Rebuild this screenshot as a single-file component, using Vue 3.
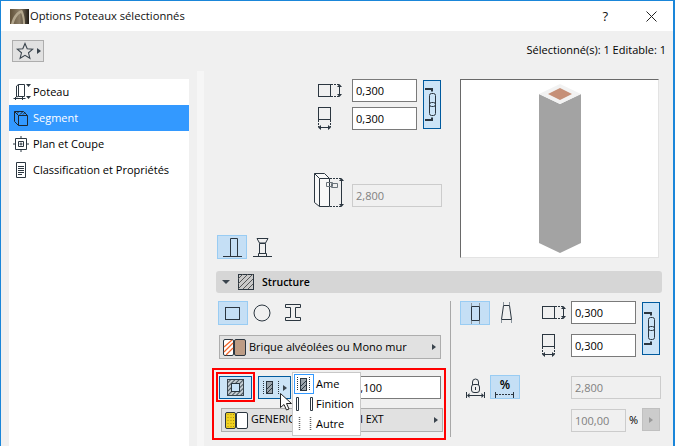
<script setup>
const navItems = [
  { id: 'poteau', label: 'Poteau' },
  { id: 'segment', label: 'Segment', active: true },
  { id: 'plan', label: 'Plan et Coupe' },
  { id: 'classif', label: 'Classification et Propriétés' }
]
</script>

<template>
  <div class="win">
    <header class="titlebar">
      <svg class="app-ico" width="19" height="15" viewBox="0 0 19 15">
        <defs>
          <linearGradient id="tg" x1="0" y1="0" x2="1" y2="0">
            <stop offset="0" stop-color="#5f5038" />
            <stop offset="0.5" stop-color="#8d7f68" />
            <stop offset="1" stop-color="#1f1b16" />
          </linearGradient>
          <pattern id="hp" width="3" height="3" patternUnits="userSpaceOnUse" patternTransform="rotate(45)">
            <rect width="3" height="3" fill="#c4ccd2" />
            <rect width="1" height="3" fill="#4a555e" />
          </pattern>
        </defs>
        <rect width="19" height="15" fill="url(#tg)" />
        <path d="M1 15C3 7 7 2 12 1c2 3 3 9 3 14h-2c0-5-1-9-2-11C7 6 5 10 3.500 15z" fill="#b3a78e" />
      </svg>
      <span class="title">Options Poteaux sélectionnés</span>
      <span class="help">?</span>
      <svg class="close" width="11" height="11" viewBox="0 0 11 11"><path d="M.5.5l10 10M10.500.5l-10 10" stroke="#222" fill="none" /></svg>
    </header>

    <div class="toolbar">
      <button class="fav">
        <svg width="18" height="18" viewBox="0 0 18 18"><path d="M9 1.500l2.200 5.200 5.600.4-4.300 3.700 1.400 5.500L9 13.400l-4.900 2.900 1.400-5.500L1.200 7.100l5.600-.4z" fill="none" stroke="#3a444d" stroke-width="1.100" /></svg>
        <i class="tri-r dark"></i>
      </button>
      <span class="sel-info">Sélectionné(s): 1 Editable: 1</span>
    </div>

    <div class="body">
      <nav class="side">
        <div v-for="item in navItems" :key="item.id" class="nav-row" :class="{ active: item.active }">
          <svg v-if="item.id === 'poteau'" class="nav-ic" width="18" height="20" viewBox="0 0 18 20">
            <path d="M5.500 2.500h6v12h-6zM5.500 2.500l-2 1.500v11l2-.5M.5 16.500h12M2.500 15v3M9.500 15v3" class="ln" />
            <path d="M13 2h5l-2.500 3zM13 14h5l-2.500 3z" fill="#2b3640" />
          </svg>
          <svg v-else-if="item.id === 'segment'" class="nav-ic" width="18" height="20" viewBox="0 0 18 20">
            <path d="M5.500 7.500h9v10h-9zM5.500 7.500l-4-4h9l4 4M1.500 3.500v10l4 4" class="ln dark" />
            <path d="M4 5.500l2-2M7 6.500l3-3M10 6.500l2-2" class="ln dark" />
          </svg>
          <svg v-else-if="item.id === 'plan'" class="nav-ic" width="18" height="20" viewBox="0 0 18 20">
            <path d="M2.500 4.500h11v11h-11zM8 2v3M8 15v3M0 10h3M13 10h3M5.500 7.500h5v5h-5zM8 8.500v3M6.500 10h3" class="ln" />
          </svg>
          <svg v-else class="nav-ic" width="18" height="20" viewBox="0 0 18 20">
            <path d="M3.500 2.500h9v15h-9zM5 6.500h6M5 8.500h6M5 10.500h6M5 12.500h6M5 14.500h4" class="ln" />
          </svg>
          <span class="lift">{{ item.label }}</span>
        </div>
      </nav>
      <div class="strip"></div>

      <main class="main">
        <section class="top">
          <div class="geom">
            <div class="dims">
              <svg class="dim-ic" width="26" height="23" viewBox="0 0 26 23">
                <rect x=".5" y="5.500" width="12" height="12" class="ln" />
                <path d="M13 5.500h8M13 17.500h8" class="dash" />
                <path d="M21.500 7v9" class="ln" />
                <path d="M19 8l2.500-3L24 8zM19 15l2.500 3 2.500-3z" fill="#2b3640" />
              </svg>
              <input class="field" readonly value="0,300" />
              <button class="link">
                <svg width="16" height="47" viewBox="0 0 16 47">
                  <path d="M1 8h7v2.500M1 39h7v-2.500" fill="none" stroke="#2b3640" stroke-width="2" />
                  <rect x="5.500" y="12.500" width="6" height="13" rx="2" class="ln" />
                  <rect x="5.500" y="21.500" width="6" height="13" rx="2" class="ln" />
                </svg>
              </button>
              <svg class="dim-ic second" width="26" height="23" viewBox="0 0 26 23">
                <rect x=".5" y=".5" width="12" height="12" class="ln" />
                <path d="M.5 13v7M12.500 13v7" class="dash" />
                <path d="M2 20.500h9" class="ln" />
                <path d="M3 18L0 20.500 3 23zM10 18l3 2.500-3 2.500z" fill="#2b3640" />
              </svg>
              <input class="field second" readonly value="0,300" />
            </div>
            <div class="height-row">
              <svg class="h-ic" width="31" height="35" viewBox="0 0 31 35">
                <path d="M.5.500h10l5 5v28h-10l-5-4z" fill="#f8f8f8" />
                <path d="M.5.500h10l5 5h-10zM5.500 5.500v28h10v-28M.5.500v29l5 4" class="ln" />
                <path d="M16 5.500h11M16 33.500h11" class="dash" />
                <path d="M27.500 7v25" class="ln" />
                <path d="M25 8l2.500-3L30 8zM25 31l2.500 3 2.500-3z" fill="#2b3640" />
                <path d="M12.500 9.500h6v4h-6zM17.500 10.500h6v4h-6z" fill="none" stroke="#6b747b" />
              </svg>
              <input class="field disabled wide" disabled value="2,800" />
            </div>
            <div class="col-types">
              <button class="tog sel">
                <svg width="30" height="24" viewBox="0 0 30 24"><path d="M13.500 21V3.500h7V21M6 21.500h19" class="ln" /></svg>
              </button>
              <svg class="tog-ic" width="20" height="24" viewBox="0 0 20 24">
                <path d="M4 3.500h11l-2.500 4.500h-6zM6.500 8.500h6v10h-6zM5.500 18.500h8v3h-8zM0 21.500h19" class="ln" />
              </svg>
            </div>
          </div>
          <div class="preview">
            <svg width="197" height="177" viewBox="0 0 197 177">
              <path d="M78 14l21 10 21-10v149l-21 10-21-10z" fill="#a3a3a3" />
              <path d="M99 4l21 10-21 10-21-10z" fill="#f2f2f2" />
              <path d="M99 8l12 6-12 6-12-6z" fill="#c69078" />
            </svg>
          </div>
        </section>

        <div class="sec-head">
          <i class="tri-d"></i>
          <svg class="hatch" width="16" height="16" viewBox="0 0 16 16">
            <rect x=".5" y=".5" width="15" height="15" fill="#c9c9c9" stroke="#2b3640" />
            <path d="M0 5L5 0M0 10L10 0M0 15L15 0M5 15L15 5M10 15l5-5" stroke="#555" fill="none" />
          </svg>
          <strong>Structure</strong>
        </div>

        <section class="lower">
          <div class="lower-left">
            <div class="shapes">
              <button class="tog sel">
                <svg width="30" height="24" viewBox="0 0 30 24"><rect x="7.500" y="6.500" width="14" height="12" class="ln" /></svg>
              </button>
              <svg class="shape-c" width="18" height="18" viewBox="0 0 18 18"><circle cx="9" cy="9" r="8" class="ln" /></svg>
              <svg class="shape-i" width="16" height="18" viewBox="0 0 16 18"><path d="M.5.500h15v3h-5v10h5v3H.5v-3h5v-10h-5z" class="ln" /></svg>
            </div>
            <button class="sel-box first">
              <svg class="swatch" width="23" height="17" viewBox="0 0 23 17">
                <rect x=".5" y=".5" width="10" height="16" rx="1.500" fill="#fff" stroke="#2b3640" />
                <path d="M1 8l8-7M1 13l9-9M3 16l7-7" stroke="#f0642a" stroke-width="1.200" fill="none" />
                <rect x="11.500" y=".5" width="11" height="16" rx="1.500" fill="#bc9c85" stroke="#2b3640" />
              </svg>
              <span class="lift">Brique alvéolées ou Mono mur</span>
              <i class="tri-r dark end"></i>
            </button>

            <div class="annot">
              <div class="annot-row">
                <div class="annot-inner">
                  <button class="mode-btn">
                    <svg width="31" height="21" viewBox="0 0 31 21">
                      <rect x="7.500" y="2.500" width="16" height="16" fill="url(#hp)" stroke="#3a444d" />
                      <rect x="11.500" y="6.500" width="8" height="8" fill="#c8e2f8" stroke="#2b3640" />
                    </svg>
                  </button>
                </div>
                <button class="split-btn">
                  <svg width="24" height="21" viewBox="0 0 24 21">
                    <path d="M4.500 4v13M19.500 4v13" stroke="#2b3640" stroke-dasharray="1 1" fill="none" />
                    <rect x="7.500" y="4.500" width="6" height="12" fill="#9aa4ac" stroke="#2b3640" />
                    <path d="M8 12l5-5M8 16l5-5" stroke="#2b3640" fill="none" />
                  </svg>
                  <i class="tri-r dark"></i>
                </button>
                <input class="field val" readonly value="0,100" />
              </div>
              <button class="sel-box second">
                <svg class="swatch" width="23" height="17" viewBox="0 0 23 17">
                  <rect x=".5" y=".5" width="10" height="16" rx="1.500" fill="#f0d020" stroke="#2b3640" />
                  <path d="M3 2v13M6 2v13M8.500 2v13" stroke="#a88f10" stroke-dasharray="1 2" fill="none" />
                  <rect x="11.500" y=".5" width="11" height="16" rx="1.500" fill="#fff" stroke="#2b3640" />
                </svg>
                <span class="lift tight">GENERIC - ENDUI MINI EXT</span>
                <i class="tri-r dark end"></i>
              </button>

              <div class="popup">
                <div class="pop-row">
                  <span class="pop-ic focus">
                    <svg width="18" height="18" viewBox="0 0 18 18">
                      <path d="M2.500 2v14M14.500 2v14" stroke="#2b3640" stroke-dasharray="1 1" fill="none" />
                      <rect x="5.500" y="3.500" width="6" height="12" fill="#9aa4ac" stroke="#2b3640" />
                      <path d="M6 11l5-5M6 15l5-5" stroke="#2b3640" fill="none" />
                    </svg>
                  </span>
                  <span class="lift">Ame</span>
                </div>
                <div class="pop-row">
                  <span class="pop-ic">
                    <svg width="20" height="20" viewBox="0 0 20 20"><path d="M2.500 3.500h2v13h-2zM16.500 3.500h2v13h-2z" class="ln" /></svg>
                  </span>
                  <span class="lift">Finition</span>
                </div>
                <div class="pop-row">
                  <span class="pop-ic">
                    <svg width="20" height="20" viewBox="0 0 20 20">
                      <path d="M5.500 3v14M16.500 3v14" stroke="#666" stroke-width="1.500" stroke-dasharray="1 1" fill="none" />
                    </svg>
                  </span>
                  <span class="lift">Autre</span>
                </div>
              </div>

              <svg class="cursor" width="13" height="18" viewBox="0 0 13 18">
                <path d="M.5.500v14l3.500-3 2.500 5.500 2.500-1-2.500-5.500h5z" fill="#fff" stroke="#222" />
              </svg>
            </div>
          </div>

          <div class="divider"></div>

          <div class="lower-right">
            <div class="r-types">
              <button class="tog sel">
                <svg width="30" height="24" viewBox="0 0 30 24">
                  <path d="M11.500 5.500h8v14h-8z" class="ln" />
                  <path d="M11.500 2v3M19.500 2v3M11.500 20v3M19.500 20v3" fill="none" stroke="#8a949c" />
                </svg>
              </button>
              <svg class="trap" width="13" height="24" viewBox="0 0 13 24">
                <path d="M3.500 4.500h6l2 14h-10z" class="ln" />
                <path d="M3.500 1v3M9.500 1v3M1.500 19v3M11.500 19v3" fill="none" stroke="#8a949c" />
              </svg>
            </div>
            <svg class="ric r1" width="26" height="23" viewBox="0 0 26 23">
              <rect x=".5" y="5.500" width="12" height="12" class="ln" />
              <path d="M13 5.500h8M13 17.500h8" class="dash" />
              <path d="M21.500 7v9" class="ln" />
              <path d="M19 8l2.500-3L24 8zM19 15l2.500 3 2.500-3z" fill="#2b3640" />
            </svg>
            <input class="field r1f" readonly value="0,300" />
            <button class="link r-link">
              <svg width="16" height="51" viewBox="0 0 16 51">
                <path d="M1 10h7v2.500M1 41h7v-2.500" fill="none" stroke="#2b3640" stroke-width="2" />
                <rect x="5.500" y="14.500" width="6" height="13" rx="2" class="ln" />
                <rect x="5.500" y="23.500" width="6" height="13" rx="2" class="ln" />
              </svg>
            </button>
            <svg class="ric r2" width="26" height="23" viewBox="0 0 26 23">
              <rect x=".5" y=".5" width="12" height="12" class="ln" />
              <path d="M.5 13v7M12.500 13v7" class="dash" />
              <path d="M2 20.500h9" class="ln" />
              <path d="M3 18L0 20.500 3 23zM10 18l3 2.500-3 2.500z" fill="#2b3640" />
            </svg>
            <input class="field r2f" readonly value="0,300" />

            <div class="r-mode">
              <svg class="lock" width="19" height="22" viewBox="0 0 19 22">
                <path d="M6.500 9V6a3 3 0 0 1 6 0v3" class="ln" />
                <rect x="5.500" y="8.500" width="8" height="8" rx="2.500" fill="#f0f0f0" stroke="#2b3640" />
                <path d="M9.500 11v3" class="ln" />
                <path d="M.5 16v6M18.500 16v6M2 19.500h15" class="ln" />
                <path d="M3.500 17L1 19.500 3.500 22zM15.500 17l2.500 2.500-2.500 2.500z" fill="#2b3640" />
              </svg>
              <button class="tog sel pct">
                <span class="pct-t">%</span>
                <svg width="20" height="7" viewBox="0 0 20 7"><path d="M.5 1v6M18.500 1v6" class="ln" /><path d="M1 3.500h17" class="dash" /></svg>
              </button>
            </div>
            <input class="field disabled wide r3f" disabled value="2,800" />
            <div class="r-last">
              <input class="field disabled narrow" disabled value="100,00" />
              <span class="unit">%</span>
              <button class="mini"><i class="tri-r grey"></i></button>
            </div>
          </div>
        </section>
      </main>
    </div>
  </div>
</template>

<style>
html, body { margin: 0; padding: 0; }
</style>

<style scoped>
.win {
  width: 675px;
  height: 446px;
  box-sizing: border-box;
  border: solid #1a86d9;
  border-width: 1px 2px 0 1px;
  background: #f0f0f0;
  display: flex;
  flex-direction: column;
  overflow: hidden;
  font-family: "Open Sans", "Noto Sans", sans-serif;
  font-size: 11px;
  color: #000;
}
button { padding: 0; margin: 0; font: inherit; color: inherit; box-sizing: border-box; }
.lift { margin-top: -2px; }
.tight { font-size: 10.7px; }
.ln { fill: none; stroke: #2b3640; stroke-width: 1; }
.ln.dark { stroke: #1c2730; }
.dash { fill: none; stroke: #2b3640; stroke-width: 1; stroke-dasharray: 2 1; }
.titlebar {
  height: 30px;
  flex: none;
  background: #fff;
  display: flex;
  align-items: center;
  padding-left: 9px;
}
.app-ico { margin-right: 1px; }
.title { font-size: 11.2px; color: #111; margin-top: -2px; }
.help { margin-left: auto; font-size: 13px; margin-right: 38px; color: #111; }
.close { margin-right: 16px; }
.toolbar {
  height: 40px;
  flex: none;
  display: flex;
  align-items: flex-start;
  padding: 9px 7px 0 11px;
  box-sizing: border-box;
}
.fav {
  width: 32px;
  height: 22px;
  background: #e1e1e1;
  border: 1px solid #adadad;
  display: flex;
  align-items: center;
  padding-left: 3px;
  gap: 3px;
}
.sel-info { margin-left: auto; margin-top: 2px; color: #000; }
.tri-r { display: block; width: 0; height: 0; border-style: solid; border-width: 3.5px 0 3.5px 4px; border-color: transparent; }
.tri-r.dark { border-left-color: #3a444d; }
.tri-r.grey { border-left-color: #9a9a9a; }
.tri-d { display: block; width: 0; height: 0; border-style: solid; border-width: 4px 4px 0; border-color: #3a444d transparent transparent; }

.body { flex: 1; display: flex; min-height: 0; }
.side {
  width: 180px;
  margin: 8px 0 0 8px;
  background: #fff;
  flex: none;
}
.nav-row { height: 26px; display: flex; align-items: center; padding-left: 4px; gap: 2px; box-sizing: border-box; }
.nav-row.active { background: #3399ff; color: #fff; }
.nav-ic { flex: none; }
.strip { width: 7px; margin-left: 8px; background: #f6f6f6; flex: none; }

.main { flex: 1; min-width: 0; padding-left: 8px; }
.top { height: 200px; display: flex; }
.geom { width: 243px; margin-left: 5px; flex: none; padding-top: 8px; box-sizing: border-box; }
.dims {
  display: grid;
  grid-template-columns: 34px 65px 6px 18px;
  grid-template-rows: 23px 23px;
  row-gap: 5px;
  margin-left: 101px;
}
.field {
  height: 23px;
  width: 65px;
  box-sizing: border-box;
  border: 1px solid #7a7a7a;
  background: #fff;
  font-family: inherit;
  font-size: 11px;
  padding: 0 0 0 3px;
  color: #000;
  outline: none;
  margin: 0;
}
.field.disabled { background: #f0f0f0; border-color: #cccccc; color: #808080; }
.field.wide { width: 90px; }
.field.narrow { width: 55px; }
.link {
  grid-column: 4;
  grid-row: 1 / span 2;
  margin: 1px 0 0;
  width: 18px;
  height: 49px;
  background: #cce4f7;
  border: 1px solid #005a9e;
  display: block;
}
.link svg { display: block; }
.second { grid-row: 2; }
.dim-ic.second, .dim-ic { grid-column: 1; }
.field.second { grid-column: 2; }
.height-row { display: flex; margin: 42px 0 0 97px; align-items: flex-end; gap: 7px; height: 35px; }
.h-ic { flex: none; margin-bottom: -1px; }
.col-types { margin-top: 28px; display: flex; align-items: center; gap: 6px; }
.tog { width: 30px; height: 24px; background: transparent; border: none; display: block; }
.tog.sel { background: #c5dff5; box-shadow: inset 0 0 0 1px #99ccf3; }
.tog svg { display: block; }
.preview {
  width: 199px;
  height: 179px;
  margin: 8px 0 0;
  box-sizing: border-box;
  background: #fff;
  border: 1px solid;
  border-color: #696969 #e3e3e3 #e3e3e3 #696969;
}
.preview svg { display: block; }

.sec-head {
  height: 22px;
  width: 446px;
  margin-left: 4px;
  background: #d6d6d6;
  border-radius: 3px;
  display: flex;
  align-items: center;
  padding-left: 6px;
  box-sizing: border-box;
}
.hatch { margin-left: 8px; }
.sec-head strong { margin-left: 8px; font-size: 10.5px; font-weight: 600; color: #000; }

.lower { display: flex; }
.lower-left { width: 234px; flex: none; padding-top: 8px; box-sizing: border-box; }
.shapes { display: flex; align-items: center; margin-left: 6px; height: 24px; }
.shape-c { margin-left: 5px; }
.shape-i { margin-left: 14px; }
.sel-box {
  display: flex;
  align-items: center;
  width: 222px;
  height: 24px;
  background: #e1e1e1;
  border: 1px solid #adadad;
  text-align: left;
  padding: 0 4px 0 3px;
}
.sel-box.first { margin: 10px 0 0 7px; }
.sel-box.second { margin: 6px 0 0 5px; }
.swatch { flex: none; margin-right: 3px; }
.end { margin-left: auto; }
.annot {
  position: relative;
  margin-top: 9px;
  height: 72px;
  box-sizing: border-box;
  border: 2px solid #ff0000;
  padding: 2px 3px 0 2px;
}
.annot-row { display: flex; align-items: flex-start; height: 30px; }
.annot-inner {
  width: 39px;
  height: 30px;
  box-sizing: border-box;
  border: 2px solid #ff0000;
  padding: 2px 1px;
  flex: none;
}
.mode-btn {
  display: block;
  width: 33px;
  height: 23px;
  background: #cce4f7;
  border: 1px solid #005a9e;
}
.mode-btn svg { display: block; }
.split-btn {
  width: 33px;
  height: 23px;
  margin: 4px 0 0 3px;
  background: #cce4f7;
  border: 1px solid #005a9e;
  display: flex;
  align-items: center;
  flex: none;
}
.val { margin: 4px 0 0 58px; width: 92px; padding-left: 4px; }
.popup {
  position: absolute;
  left: 78px;
  top: 2px;
  width: 69px;
  height: 64px;
  box-sizing: border-box;
  background: #fff;
  border: 1px solid #c8c8c8;
  padding: 1px;
}
.pop-row { height: 20px; display: flex; align-items: center; gap: 2px; }
.pop-ic { width: 20px; height: 20px; box-sizing: border-box; flex: none; display: block; }
.pop-ic svg { display: block; }
.pop-ic.focus { border: 1px solid #3399ff; }
.cursor { position: absolute; left: 66px; top: 23px; }

.divider { width: 1px; margin: 8px 0 3px 4px; background: #a8a8a8; flex: none; }
.lower-right {
  padding: 8px 0 0 9px;
  display: grid;
  grid-template-columns: 82px 29px 65px 6px 18px;
  grid-template-rows: 23px 10px 23px 19px 23px 10px 23px;
}
.r-types { grid-column: 1; grid-row: 1; display: flex; gap: 10px; height: 24px; }
.trap { flex: none; }
.ric { grid-column: 2; }
.ric.r1 { grid-row: 1; }
.ric.r2 { grid-row: 3; }
.r1f { grid-column: 3; grid-row: 1; }
.r2f { grid-column: 3; grid-row: 3; }
.r-link { grid-column: 5; grid-row: 1 / span 3; height: 53px; }
.r-mode { grid-column: 1; grid-row: 5; display: flex; align-items: flex-end; margin-left: 6px; gap: 5px; height: 24px; margin-top: -1px; }
.lock { flex: none; margin-bottom: 1px; }
.pct { display: flex; flex-direction: column; align-items: center; font-size: 12px; line-height: 13px; padding-top: 3px; }
.pct-t { display: block; font-weight: 600; }
.r3f { grid-column: 3 / span 3; grid-row: 5; }
.r-last { grid-column: 3 / span 3; grid-row: 7; display: flex; align-items: flex-start; }
.unit { margin: 3px 0 0 3px; font-size: 11px; }
.mini {
  width: 18px;
  height: 23px;
  margin: -1px 0 0 auto;
  background: #cccccc;
  border: 1px solid #c0c0c0;
  display: flex;
  align-items: center;
  justify-content: center;
}
</style>
